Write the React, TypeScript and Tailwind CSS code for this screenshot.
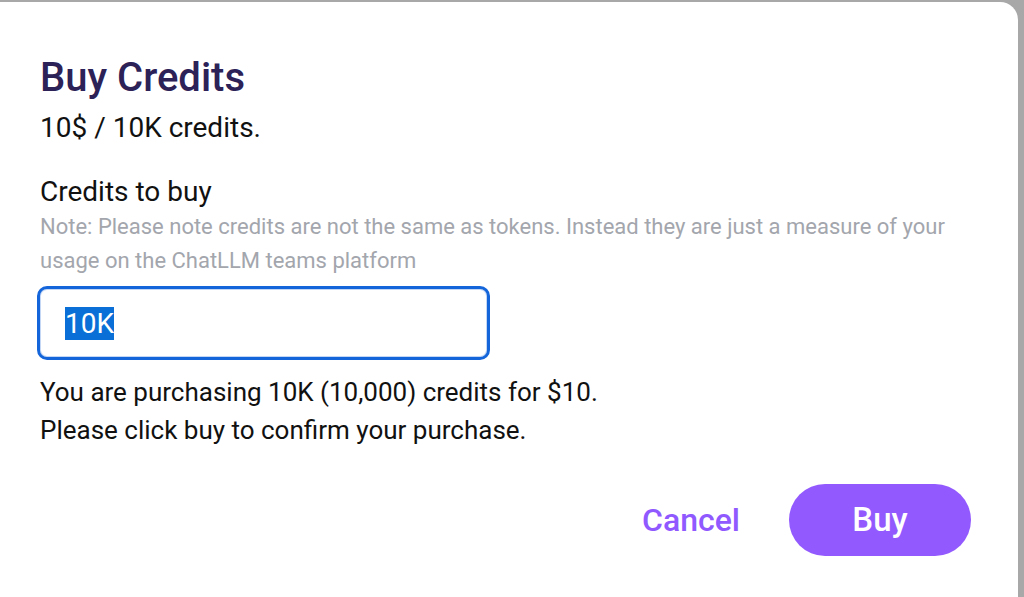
export default function App() {
  return (
    <div className="h-[597px] w-[1024px] overflow-hidden bg-[#a8a8a8] pt-[2px] pr-[6px]" style={{ fontFamily: "Roboto, 'Liberation Sans', sans-serif" }}>
      <div className="flex h-full flex-col rounded-tr-[18px] bg-white pl-[40px] pt-[52px]">
        <h1 className="text-[40px] leading-[48px] font-medium text-[#2c2257]">Buy Credits</h1>
        <p className="mt-[9px] text-[28px] leading-[34px] text-[#111]">10$ / 10K credits.</p>

        <div className="mt-[30px] flex flex-col">
          <label className="text-[28px] leading-[34px] text-[#111]">Credits to buy</label>
          <p className="mt-[1px] w-[915px] text-[22px] leading-[34px] text-[#a3a6ad]">
            Note: Please note credits are not the same as tokens. Instead they are just a measure of your usage on the ChatLLM teams platform
          </p>
          <div className="-ml-[3px] mt-[8px] flex h-[74px] w-[453px] items-center rounded-[10px] border-[3px] border-[#1565da] pl-[25px] shadow-[inset_0_0_0_1px_rgba(21,101,218,0.25)]">
            <span className="bg-[#0a6fd6] text-[28px] leading-[33px] text-white">10K</span>
          </div>
        </div>

        <div className="mt-[13px] text-[26px] leading-[38px] text-[#111]">
          <p>You are purchasing 10K (10,000) credits for $10.</p>
          <p>Please click buy to confirm your purchase.</p>
        </div>

        <div className="mt-[35px] flex items-center justify-end gap-[49px] pr-[47px]">
          <button className="text-[32px] font-medium text-[#8f59ff]">Cancel</button>
          <button className="h-[72px] w-[182px] rounded-full bg-[#9259fe] text-[33px] font-medium text-white">Buy</button>
        </div>
      </div>
    </div>
  );
}
